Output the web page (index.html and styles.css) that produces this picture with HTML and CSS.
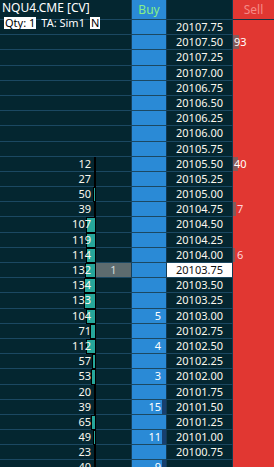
FILE: index.html
```html
<!DOCTYPE html>
<html lang="en">

<head>
  <meta charset="UTF-8" />
  <title>NQU4 DOM</title>
  <link rel="stylesheet" href="styles.css">
</head>

<body>
  <div id="dom">
    <div class="info">
      <div class="title">NQU4.CME [CV]</div>
      <div class="account">
        <span class="tag">Qty: 1</span>
        <span>TA: Sim1</span>
        <span class="tag">N</span>
      </div>
    </div>

    <div class="row head">
      <div class="vol"></div>
      <div class="mine"></div>
      <div class="buy">Buy</div>
      <div class="price"></div>
      <div class="sell">Sell</div>
    </div>

    <div class="row"><div class="vol"></div><div class="mine"></div><div class="buy"></div><div class="price">20107.75</div><div class="sell"></div></div>
    <div class="row"><div class="vol"></div><div class="mine"></div><div class="buy"></div><div class="price">20107.50</div><div class="sell"><i style="width:6px"></i><span>93</span></div></div>
    <div class="row"><div class="vol"></div><div class="mine"></div><div class="buy"></div><div class="price">20107.25</div><div class="sell"></div></div>
    <div class="row"><div class="vol"></div><div class="mine"></div><div class="buy"></div><div class="price">20107.00</div><div class="sell"></div></div>
    <div class="row"><div class="vol"></div><div class="mine"></div><div class="buy"></div><div class="price">20106.75</div><div class="sell"></div></div>
    <div class="row"><div class="vol"></div><div class="mine"></div><div class="buy"></div><div class="price">20106.50</div><div class="sell"></div></div>
    <div class="row"><div class="vol"></div><div class="mine"></div><div class="buy"></div><div class="price">20106.25</div><div class="sell"></div></div>
    <div class="row"><div class="vol"></div><div class="mine"></div><div class="buy"></div><div class="price">20106.00</div><div class="sell"></div></div>
    <div class="row"><div class="vol"></div><div class="mine"></div><div class="buy"></div><div class="price">20105.75</div><div class="sell"></div></div>
    <div class="row"><div class="vol"><b style="width:2px"></b><span>12</span></div><div class="mine"></div><div class="buy"></div><div class="price">20105.50</div><div class="sell"><i style="width:5px"></i><span>40</span></div></div>
    <div class="row"><div class="vol"><b style="width:2px"></b><span>27</span></div><div class="mine"></div><div class="buy"></div><div class="price">20105.25</div><div class="sell"></div></div>
    <div class="row"><div class="vol"><b style="width:3px"></b><span>50</span></div><div class="mine"></div><div class="buy"></div><div class="price">20105.00</div><div class="sell"></div></div>
    <div class="row"><div class="vol"><b style="width:2px"></b><span>39</span></div><div class="mine"></div><div class="buy"></div><div class="price">20104.75</div><div class="sell pink"><i style="width:3px"></i><span>7</span></div></div>
    <div class="row"><div class="vol"><b style="width:10px"></b><span>107</span></div><div class="mine"></div><div class="buy"></div><div class="price">20104.50</div><div class="sell"></div></div>
    <div class="row"><div class="vol"><b style="width:10px"></b><span>119</span></div><div class="mine"></div><div class="buy"></div><div class="price">20104.25</div><div class="sell"></div></div>
    <div class="row"><div class="vol"><b style="width:10px"></b><span>114</span></div><div class="mine"></div><div class="buy"></div><div class="price">20104.00</div><div class="sell pink"><i style="width:2px"></i><span>6</span></div></div>
    <div class="row"><div class="vol"><b style="width:11px"></b><span>132</span></div><div class="mine order">1</div><div class="buy"></div><div class="price last">20103.75</div><div class="sell"></div></div>
    <div class="row"><div class="vol"><b style="width:12px"></b><span>134</span></div><div class="mine"></div><div class="buy"></div><div class="price">20103.50</div><div class="sell"></div></div>
    <div class="row"><div class="vol"><b style="width:12px"></b><span>133</span></div><div class="mine"></div><div class="buy"></div><div class="price">20103.25</div><div class="sell"></div></div>
    <div class="row"><div class="vol"><b style="width:10px"></b><span>104</span></div><div class="mine"></div><div class="buy"><span>5</span></div><div class="price">20103.00</div><div class="sell"></div></div>
    <div class="row"><div class="vol"><b style="width:6px"></b><span>71</span></div><div class="mine"></div><div class="buy"></div><div class="price">20102.75</div><div class="sell"></div></div>
    <div class="row"><div class="vol"><b style="width:10px"></b><span>112</span></div><div class="mine"></div><div class="buy"><span>4</span></div><div class="price">20102.50</div><div class="sell"></div></div>
    <div class="row"><div class="vol"><b style="width:4px"></b><span>57</span></div><div class="mine"></div><div class="buy"></div><div class="price">20102.25</div><div class="sell"></div></div>
    <div class="row"><div class="vol"><b style="width:5px"></b><span>53</span></div><div class="mine"></div><div class="buy"><span>3</span></div><div class="price">20102.00</div><div class="sell"></div></div>
    <div class="row"><div class="vol"><b style="width:2px"></b><span>20</span></div><div class="mine"></div><div class="buy"></div><div class="price">20101.75</div><div class="sell"></div></div>
    <div class="row"><div class="vol"><b style="width:2px"></b><span>39</span></div><div class="mine"></div><div class="buy"><i style="width:4px"></i><span>15</span></div><div class="price">20101.50</div><div class="sell"></div></div>
    <div class="row"><div class="vol"><b style="width:5px"></b><span>65</span></div><div class="mine"></div><div class="buy"></div><div class="price">20101.25</div><div class="sell"></div></div>
    <div class="row"><div class="vol"><b style="width:3px"></b><span>49</span></div><div class="mine"></div><div class="buy"><i style="width:4px"></i><span>11</span></div><div class="price">20101.00</div><div class="sell"></div></div>
    <div class="row"><div class="vol"><b style="width:2px"></b><span>23</span></div><div class="mine"></div><div class="buy"></div><div class="price">20100.75</div><div class="sell"></div></div>
    <div class="row"><div class="vol"><b style="width:2px"></b><span>40</span></div><div class="mine"></div><div class="buy"><i style="width:4px"></i><span>9</span></div><div class="price"></div><div class="sell"></div></div>
  </div>
</body>

</html>
```

FILE: styles.css
```css
body {
  margin: 0;
  padding: 0;
  background-color: #042630;
  font-family: 'Noto Sans', 'Open Sans', sans-serif;
  overflow: hidden;
}

#dom {
  position: relative;
  width: 274px;
  height: 467px;
  overflow: hidden;
  color: #fbf8ee;
  font-size: 11px;
}

/* title + account line sits over the top rows */
.info {
  position: absolute;
  top: 0;
  left: 0;
  z-index: 5;
  padding-left: 2px;
}

.title {
  font-size: 12px;
  line-height: 15px;
  color: #fff;
}

.account {
  display: flex;
  align-items: center;
  gap: 5px;
  margin-top: 2px;
  padding-left: 2px;
  font-size: 11px;
  line-height: 12px;
  color: #fff;
}

.tag {
  background-color: #fff;
  color: #000;
  padding: 0 1px;
}

.row {
  display: grid;
  grid-template-columns: 96px 36px 35px 66px 41px;
  height: 15.2px;
  line-height: 14px;
}

.row.head {
  height: 20px;
  line-height: 19px;
}

.row > div {
  position: relative;
  box-sizing: border-box;
  border-bottom: 1px solid #1b4862;
  white-space: nowrap;
}

/* numbers sit above their bars */
.row span {
  position: relative;
  z-index: 2;
}

.vol {
  text-align: right;
  padding-right: 5px;
}

.vol b {
  position: absolute;
  right: 0;
  top: 0;
  bottom: -1px;
  box-sizing: border-box;
  background-color: #26a69a;
  border: 1px solid #000;
}

.mine {
  border-right: 1px solid #15405a;
}

.mine.order {
  background-color: #5d6b6e;
  color: #d4dcdc;
  text-align: center;
}

.buy {
  background-color: #2a8ad6;
  border-right: 1px solid #123a52;
  text-align: right;
  padding-right: 5px;
  color: #fff;
}

.buy i {
  position: absolute;
  right: 0;
  top: 0;
  bottom: 0;
  background-color: #173f6e;
}

.head .buy {
  text-align: center;
  padding-right: 0;
  color: #86ef86;
  font-size: 12px;
}

.price {
  text-align: center;
  border-right: 1px solid #123a52;
}

.price.last {
  background-color: #fff;
  color: #111;
}

.sell {
  background-color: #e13732;
  padding-left: 1px;
  color: #fff;
}

.row > .sell {
  border-bottom-color: #e13732;
}

.head > .sell {
  border-bottom-color: #0e3345;
  text-align: center;
  color: #f58a86;
  font-size: 12px;
  padding-left: 0;
}

.sell.pink {
  color: #ffd4dc;
  padding-left: 4px;
}

.sell i {
  position: absolute;
  left: 0;
  top: 0;
  bottom: 0;
  background-color: rgba(110, 100, 100, 0.8);
}
```
